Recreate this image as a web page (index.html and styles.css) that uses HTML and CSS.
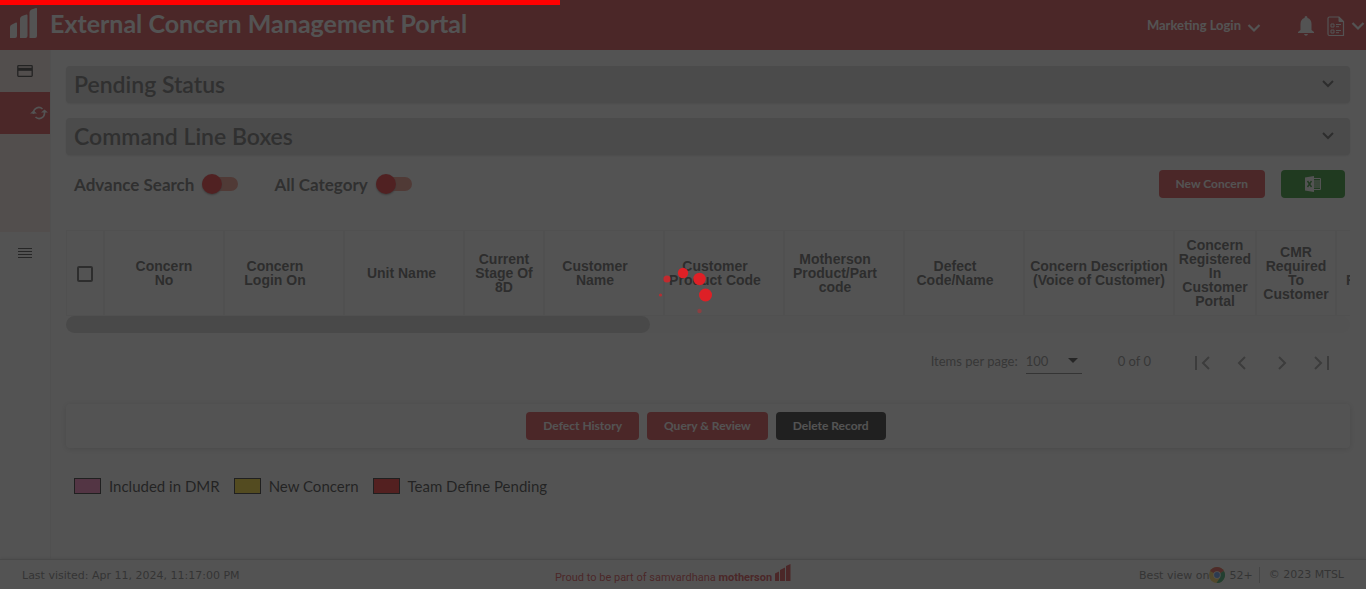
FILE: index.html
```html
<!DOCTYPE html>
<html lang="en">
<head>
<meta charset="utf-8">
<title>External Concern Management Portal</title>
<link rel="stylesheet" href="styles.css">
</head>
<body>
<div class="app">
  <header class="topbar">
    <a class="brand" href="#" aria-label="Home">
      <svg width="28" height="32" viewBox="0 0 28 32"><path d="M0 31V20q0-2 2-2.500L6 15.500q1-.3 1 1V29q0 2-2 2zM10 31V12q0-2 2-3L16.500 7.500q1-.3 1 1V29q0 2-2 2zM19.500 31V5.500q0-2 2-3L26 1q1-.3 1 1V29q0 2-2 2z" fill="#fff"/></svg>
    </a>
    <h1 class="title">External Concern Management Portal</h1>
    <button class="login" type="button">Marketing Login
      <svg width="14" height="10" viewBox="0 0 14 10"><path d="M1.500 2L7 7.500 12.500 2" fill="none" stroke="#fff" stroke-width="2.200"/></svg>
    </button>
    <button class="icon-btn bell" type="button" aria-label="Notifications">
      <svg width="18" height="20" viewBox="0 0 18 20"><path d="M9 0q1.500 0 1.500 2 4 1.300 4 6v6l2.500 2v1H1v-1l2.500-2V8q0-4.700 4-6 0-2 1.500-2zM7 18h4q-.5 1.800-2 1.800T7 18z" fill="#fff"/></svg>
    </button>
    <button class="icon-btn docs" type="button" aria-label="Documents">
      <svg width="18" height="21" viewBox="0 0 18 21" fill="none" stroke="#fff"><path d="M2.500 1H12l4.500 4.500v14h-14q-1.500 0-1.500-1.500V2.500Q1 1 2.500 1z" stroke-width="1.200"/><path d="M12 1v4.500h4.500z" fill="#fff"/><path d="M4 8h3v3H4zM4 14h3v3H4zM9 8.500h5M9 10.700h3M9 14.500h5M9 16.700h3"/></svg>
      <svg width="14" height="10" viewBox="0 0 14 10"><path d="M1.500 2L7 7.500 12.500 2" fill="none" stroke="#fff" stroke-width="2.200"/></svg>
    </button>
  </header>

  <div class="body">
    <nav class="sidebar" aria-label="Main">
      <a class="side-item tint" href="#" aria-label="Dashboard">
        <svg width="16" height="12" viewBox="0 0 16 12"><path d="M1.500.7h13q.7 0 .7.700v9.200q0 .7-.7.700h-13q-.7 0-.7-.7V1.400q0-.7.700-.7z" fill="none" stroke="#111" stroke-width="1.300"/><path d="M1 2.800h14v3H1z" fill="#111"/></svg>
      </a>
      <a class="side-item active" href="#" aria-label="Concerns">
        <svg width="18" height="14" viewBox="0 0 18 14" fill="none" stroke="#fff" stroke-width="1.600"><path d="M3.500 8V7A5.300 5.300 0 0 1 12.500 3M14.500 6V7A5.300 5.300 0 0 1 5.500 11"/><path d="M0 7.500h7L3.500 4.500zM11 6.500h7L14.500 3.500z" fill="#fff" stroke="none"/></svg>
      </a>
      <div class="side-space tint"></div>
      <a class="side-item" href="#" aria-label="Menu">
        <svg width="14" height="10" viewBox="0 0 14 10"><path d="M0 .5h14M0 3.500h14M0 6.500h14M0 9.500h14" stroke="#222"/></svg>
      </a>
    </nav>

    <main class="content">
      <button class="panel" type="button">Pending Status
        <svg width="14" height="10" viewBox="0 0 14 10"><path d="M2 2l5 5 5-5" fill="none" stroke="#444" stroke-width="2"/></svg>
      </button>
      <button class="panel" type="button">Command Line Boxes
        <svg width="14" height="10" viewBox="0 0 14 10"><path d="M2 2l5 5 5-5" fill="none" stroke="#444" stroke-width="2"/></svg>
      </button>

      <div class="tools">
        <label class="switch">Advance Search <input type="checkbox"></label>
        <label class="switch">All Category <input type="checkbox"></label>
        <div class="tool-buttons">
          <button class="btn" type="button">New Concern</button>
          <button class="btn excel" type="button" aria-label="Export to Excel">
            <svg width="16" height="16" viewBox="0 0 16 16"><path d="M0 1.500L9 0v16L0 14.500z" fill="#fff"/><path d="M2.500 5l4 6M6.500 5l-4 6" stroke="#008000" stroke-width="1.400"/><path d="M9 2.500h6.500v11H9M9 5h6.500M9 7h6.500M9 9h6.500M9 11h6.500" fill="none" stroke="#fff"/></svg>
          </button>
        </div>
      </div>

      <div class="table-wrap">
        <table class="grid">
          <colgroup>
            <col class="w-check"><col class="w-std"><col class="w-std"><col class="w-std"><col class="w-stage"><col class="w-std"><col class="w-std"><col class="w-std"><col class="w-std"><col class="w-desc"><col class="w-portal"><col class="w-stage"><col class="w-std">
          </colgroup>
          <thead>
            <tr>
              <th><input class="check" type="checkbox" aria-label="Select all"></th>
              <th>Concern<br>No</th>
              <th class="sort">Concern<br>Login On</th>
              <th class="unit">Unit Name</th>
              <th>Current<br>Stage Of<br>8D</th>
              <th class="sort">Customer<br>Name</th>
              <th class="sort">Customer<br>Product Code</th>
              <th class="sort">Motherson<br>Product/Part<br>code</th>
              <th class="sort">Defect<br>Code/Name</th>
              <th>Concern Description<br>(Voice of Customer)</th>
              <th>Concern<br>Registered<br>In<br>Customer<br>Portal</th>
              <th>CMR<br>Required<br>To<br>Customer</th>
              <th class="cut"><br>F</th>
            </tr>
          </thead>
        </table>
      </div>
      <div class="scroll"><div class="thumb"></div></div>

      <div class="pager">
        <label for="size">Items per page:</label>
        <div class="select">
          <select id="size"><option>100</option></select>
          <svg width="10" height="5" viewBox="0 0 10 5"><path d="M0 0h10L5 5z" fill="#222"/></svg>
        </div>
        <span class="range">0 of 0</span>
        <div class="pages">
          <button type="button" aria-label="First page"><svg width="16" height="14" viewBox="0 0 16 14"><path d="M2 0v14M15 1L9 7l6 6"/></svg></button>
          <button type="button" aria-label="Previous page"><svg width="16" height="14" viewBox="0 0 16 14"><path d="M11 1L5 7l6 6"/></svg></button>
          <button type="button" aria-label="Next page"><svg width="16" height="14" viewBox="0 0 16 14"><path d="M5 1l6 6-6 6"/></svg></button>
          <button type="button" aria-label="Last page"><svg width="16" height="14" viewBox="0 0 16 14"><path d="M1 1l6 6-6 6M14 0v14"/></svg></button>
        </div>
      </div>

      <div class="actions">
        <button class="btn" type="button">Defect History</button>
        <button class="btn" type="button">Query &amp; Review</button>
        <button class="btn dark" type="button">Delete Record</button>
      </div>

      <ul class="legend">
        <li><span class="swatch pink"></span>Included in DMR</li>
        <li><span class="swatch gold"></span>New Concern</li>
        <li><span class="swatch red"></span>Team Define Pending</li>
      </ul>
    </main>
  </div>

  <footer class="footer">
    <span>Last visited: Apr 11, 2024, 11:17:00 PM</span>
    <div class="proud">
      <span>Proud to be part of samvardhana <b>motherson</b></span>
      <svg width="16" height="17" viewBox="0 0 16 17"><path d="M0 17V9.500L4 7.500V17zM5 17V6L10 3.500V17zM11 17V2L15.500 0V17z" fill="#d72328"/></svg>
    </div>
    <div class="support">
      <span class="best">Best view on<svg width="16" height="16" viewBox="0 0 16 16"><circle cx="8" cy="8" r="8" fill="#ffcd40"/><path d="M8 8L1.100 4A8 8 0 0 1 14.900 4z" fill="#e33b2e"/><path d="M8 8l6.900-4A8 8 0 0 1 7.500 16l4-6z" fill="#0f9d58"/><circle cx="8" cy="8" r="3.700" fill="#fff"/><circle cx="8" cy="8" r="2.900" fill="#4285f4"/></svg> 52+</span>
      <span class="copy">© 2023 MTSL</span>
    </div>
  </footer>
</div>

<div class="overlay" role="status" aria-label="Loading">
  <div class="progress"></div>
  <svg width="60" height="60" viewBox="-30 -30 60 60" fill="#de2026"><circle cx="22.500" cy="0" r="6.500"/><circle cx="16.500" cy="-16" r="6.200"/><circle cx="0" cy="-22" r="5.200"/><circle cx="-16" cy="-16" r="3.600" opacity=".8"/><circle cx="-22.500" cy="0" r="1.600" opacity=".7"/><circle cx="16.500" cy="16" r="2.200" opacity=".4"/></svg>
</div>
</body>
</html>
```
FILE: styles.css
```css
* { box-sizing: border-box; }

body {
  margin: 0;
  background: #fff;
  color: #111;
  font-family: Lato, "Noto Sans", sans-serif;
  font-size: 14px;
}

button {
  font-family: inherit;
  border: 0;
  cursor: pointer;
}

svg { display: block; flex: none; }

.app {
  display: flex;
  flex-direction: column;
  min-height: 100vh;
}

.topbar {
  display: flex;
  align-items: center;
  height: 50px;
  background: #d72328;
  color: #fff;
}

.brand { width: 50px; padding: 0 0 4px 10px; }

.title {
  flex: 1;
  margin: 0;
  padding-bottom: 4px;
  font-size: 25px;
  line-height: 32px;
}

.login {
  display: flex;
  align-items: center;
  gap: 6px;
  padding: 0;
  background: none;
  color: #fff;
  font-size: 13px;
  font-weight: 700;
}

.login svg { margin-top: 6px; }

.icon-btn {
  display: flex;
  align-items: center;
  gap: 6px;
  padding: 2px 0 0;
  background: none;
}

.bell { margin-left: 36px; }
.docs { margin: 0 1px 0 12px; }

.body { display: flex; flex: 1; }

.sidebar {
  width: 51px;
  border-right: 1px solid #eee;
}

.side-item {
  display: flex;
  align-items: center;
  justify-content: center;
  height: 42px;
}

.tint { background: #fae4df; }
.active { justify-content: flex-end; padding-right: 2px; background: #d72328; }
.side-space { height: 98px; }

.content {
  flex: 1;
  min-width: 0;
  padding: 16px 16px 16px 15px;
}

.panel {
  display: flex;
  align-items: center;
  justify-content: space-between;
  width: 100%;
  height: 37px;
  margin-bottom: 15px;
  padding: 0 15px 2px 8px;
  border-radius: 4px;
  background: #d4d4d4;
  box-shadow: 0 1px 2px #ddd;
  color: #505050;
  font-size: 23px;
  font-weight: 600;
}

.tools {
  display: flex;
  align-items: center;
  gap: 36px;
  height: 28px;
  padding: 0 5px 0 8px;
}

.switch {
  display: flex;
  align-items: center;
  gap: 8px;
  color: #505050;
  font-size: 17px;
  font-weight: 700;
}

.switch input {
  appearance: none;
  display: flex;
  align-items: center;
  width: 36px;
  height: 14px;
  margin: 0;
  border-radius: 7px;
  background: #f08070;
}

.switch input::before {
  content: "";
  width: 20px;
  height: 20px;
  border-radius: 10px;
  background: #f0080c;
  box-shadow: 0 1px 2px #888;
}

.tool-buttons { display: flex; gap: 16px; margin-left: auto; }

.btn {
  height: 28px;
  padding: 0 17px 2px;
  border-radius: 4px;
  background: #d72328;
  color: #fff;
  font-size: 12px;
  font-weight: 700;
}

.excel { padding: 0 24px; background: #008000; }
.dark { background: #000; }

.table-wrap { margin-top: 32px; overflow: hidden; }

.grid {
  table-layout: fixed;
  width: 1390px;
  border-collapse: separate;
  border-spacing: 0;
}

.w-check { width: 38px; }
.w-std { width: 120px; }
.w-stage { width: 80px; }
.w-desc { width: 150px; }
.w-portal { width: 82px; }

.grid th {
  height: 86px;
  padding: 0;
  border: 1px solid #ededed;
  color: #444;
  font: bold 14px/14px "Liberation Sans", Arial, sans-serif;
}

.grid .sort { padding-right: 18px; }
.grid .unit { padding-right: 5px; }
.grid .cut { padding-left: 9px; text-align: left; }

.check {
  appearance: none;
  display: block;
  width: 16px;
  height: 16px;
  margin: 2px auto 0;
  border: 2px solid #444;
  border-radius: 2px;
}

.scroll { border-radius: 9px; background: #f8f8f8; }

.thumb {
  width: 45.5%;
  height: 17px;
  border-radius: 9px;
  background: #cdcdcd;
}

.pager {
  display: flex;
  align-items: center;
  justify-content: flex-end;
  height: 56px;
  margin-bottom: 15px;
  padding-right: 8px;
  color: #737373;
  font-size: 13px;
}

.select {
  display: flex;
  align-items: center;
  width: 56px;
  height: 25px;
  margin-left: 8px;
  border-bottom: 1px solid #666;
}

.select select {
  appearance: none;
  width: 42px;
  padding: 0;
  border: 0;
  background: none;
  color: #737373;
  font: inherit;
}

.range { margin: 0 31px 0 36px; }

.pages { display: flex; }

.pages button {
  display: flex;
  align-items: center;
  justify-content: center;
  width: 40px;
  height: 40px;
  padding: 4px 0 0;
  background: none;
}

.pages path { fill: none; stroke: #8a8a8a; stroke-width: 2; }

.actions {
  display: flex;
  justify-content: center;
  gap: 8px;
  padding: 8px 12px 8px 8px;
  border-radius: 4px;
  box-shadow: 0 1px 6px #ccc;
}

.legend {
  display: flex;
  gap: 14px;
  margin: 29px 0 0;
  padding: 0 8px;
  list-style: none;
  font-size: 15px;
}

.legend li { display: flex; align-items: center; gap: 8px; }

.swatch { width: 27px; height: 16px; border: 1px solid #000; }
.pink { background: #ff69b4; }
.gold { background: #ffd700; }
.red { background: #f00; }

.footer {
  display: grid;
  grid-template-columns: 1fr auto 1fr;
  align-items: center;
  height: 30px;
  padding: 1px 22px 0;
  border-top: 1px solid #ccc;
  box-shadow: 0 -1px 3px #ddd;
  color: #666;
  font: 11px "DejaVu Sans", Verdana, sans-serif;
}

.proud {
  display: flex;
  align-items: baseline;
  gap: 3px;
  padding: 0 20px 2px 0;
  color: #d72328;
  font: 11px Roboto, Arial, sans-serif;
}

.support { display: flex; align-items: center; justify-content: flex-end; }
.best { display: flex; align-items: center; }
.best svg { margin-right: 4px; }
.copy { margin-left: 6px; padding-left: 9px; border-left: 1px solid #bbb; line-height: 16px; }

.overlay {
  position: fixed;
  inset: 0;
  display: flex;
  align-items: center;
  justify-content: center;
  background: rgba(40, 40, 40, 0.8);
}

.progress {
  position: absolute;
  top: 0;
  left: 0;
  width: 41%;
  height: 5px;
  background: #f00;
}
```
